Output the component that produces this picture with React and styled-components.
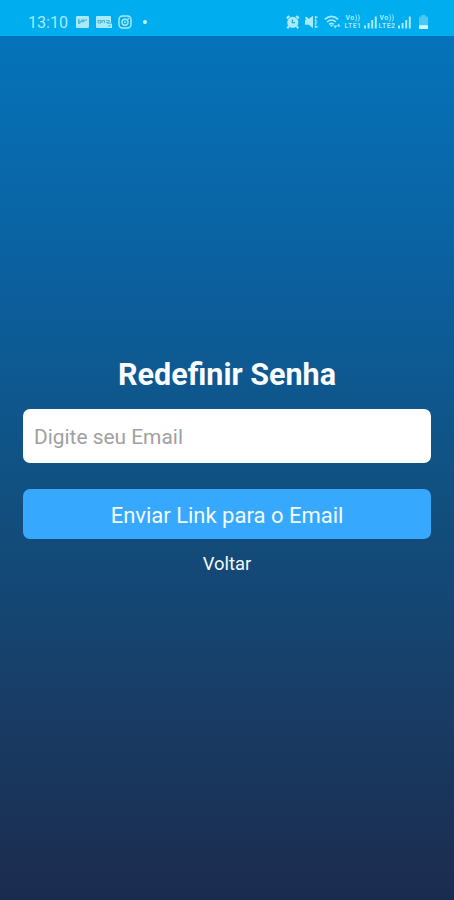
import React, { useState } from "react"
import styled, { createGlobalStyle } from "styled-components"

const App = () => {
  const [email, setEmail] = useState("")

  return (
    <Screen>
      <GlobalStyle />
      <StatusBar>
        <Clock>13:10</Clock>
        <Notifications>
          <PictureIcon />
          <CardIcon />
          <CameraIcon />
          <Dot />
        </Notifications>
        <System>
          <AlarmIcon />
          <MuteIcon />
          <WifiIcon />
          <SimCards>
            <Sim number="1" />
            <Sim number="2" />
          </SimCards>
          <BatteryIcon />
        </System>
      </StatusBar>
      <Form onSubmit={e => e.preventDefault()}>
        <Title>Redefinir Senha</Title>
        <Input
          type="email"
          placeholder="Digite seu Email"
          aria-label="Email"
          value={email}
          onChange={e => setEmail(e.target.value)}
        />
        <SubmitButton type="submit">Enviar Link para o Email</SubmitButton>
        <BackButton type="button">Voltar</BackButton>
      </Form>
    </Screen>
  )
}

const PictureIcon = () => (
  <Icon width="13" height="12" viewBox="0 0 13 12">
    <rect width="13" height="12" rx="1.2" fill="currentColor" />
    <path
      d="M2 8V3h1.5v2H5V3.5h6v1.3H9L7.2 6.8 5.5 5.8 3.6 8z"
      fill="#4dbfe2"
    />
  </Icon>
)

const CardIcon = () => (
  <Icon width="16" height="12" viewBox="0 0 16 12">
    <path
      d="M1 0h13q1 0 1 1v6H11v5H1q-1 0-1-1V1q0-1 1-1z"
      fill="currentColor"
    />
    <path
      d="M2 7V4.5h2.5V7H2M6 7V4.5h2.5V7M10 4.5h3v2h-3"
      fill="none"
      stroke="#4dbbdc"
      strokeWidth="1.2"
    />
    <path d="M11 7.5h5V12h-5z" fill="currentColor" />
    <path d="M12.2 9.8h2.4" stroke="#35b4df" />
  </Icon>
)

const CameraIcon = () => (
  <Icon width="14" height="14" viewBox="0 0 14 14">
    <rect
      x="1"
      y="1"
      width="12"
      height="12"
      rx="3.5"
      fill="none"
      stroke="currentColor"
      strokeWidth="1.5"
    />
    <circle
      cx="7"
      cy="7.2"
      r="3"
      fill="none"
      stroke="currentColor"
      strokeWidth="1.4"
    />
    <circle cx="7" cy="7.2" r="1" fill="currentColor" />
    <circle cx="10.4" cy="3.6" r="0.9" fill="currentColor" />
  </Icon>
)

const AlarmIcon = () => (
  <Icon width="14" height="14" viewBox="0 0 14 14">
    <circle cx="6.8" cy="7.4" r="5.6" fill="currentColor" />
    <path
      d="M.7 3.4 3.4 1M12.9 3.4 10.2 1M3 11.3l-1.7 1.9M10.6 11.3l1.7 1.9"
      stroke="currentColor"
      strokeWidth="2.2"
    />
    <path
      d="M6.4 4.6v3h2.6"
      fill="none"
      stroke="#12aee6"
      strokeWidth="1.3"
    />
  </Icon>
)

const MuteIcon = () => (
  <Icon width="14" height="14" viewBox="0 0 14 14">
    <path d="M0 2h2l1.5 2L8 .8v12.4L3.8 9.8H0V5h1z" fill="currentColor" />
    <path
      d="M10.6 1v12"
      stroke="currentColor"
      strokeWidth="1.6"
      strokeDasharray="2.4 .8"
    />
    <path d="M11 2.2h2M11 7h1.5M11 11.8h2" stroke="currentColor" />
  </Icon>
)

const WifiIcon = () => (
  <Wifi width="17" height="14" viewBox="0 0 17 14">
    <path
      d="M.8 4.4Q7.5-1.6 14.2 4.4M3 7q4.5-4 9 0M5.2 9.3q2.3-2 4.6 0"
      fill="none"
      stroke="currentColor"
      strokeWidth="1.6"
    />
    <path d="M6 10h3L7.5 12z" fill="currentColor" />
    <path d="M9.3 10.5h3.8l-1.9 3zM12.7 11.5h3.8l-1.9-3z" fill="currentColor" />
  </Wifi>
)

const Sim = ({ number }) => (
  <SimGroup>
    <Network>
      <NetworkLabel>Vo))</NetworkLabel>
      <NetworkLabel>LTE{number}</NetworkLabel>
    </Network>
    <Icon width="14" height="14" viewBox="0 0 14 14">
      <path
        d="M1 13.5v-3M4.6 13.5V8M8.2 13.5V5M11.8 13.5V1.5"
        stroke="currentColor"
        strokeWidth="2"
      />
    </Icon>
  </SimGroup>
)

const BatteryIcon = () => (
  <Battery width="9" height="14" viewBox="0 0 9 14">
    <path
      d="M1 1.5h1.5V0h4v1.5H8l1 1V14H0V2.5z"
      fill="currentColor"
      opacity=".45"
    />
    <path d="M0 10.3h9V13q0 1-1 1H1q-1 0-1-1z" fill="#d4f8ff" />
  </Battery>
)

const GlobalStyle = createGlobalStyle`
  * {
    box-sizing: border-box;
  }

  body {
    margin: 0;
    font-family: Roboto, sans-serif;
  }
`

const Screen = styled.div`
  display: flex;
  flex-direction: column;
  height: 100vh;
  background: linear-gradient(
    #0573ba 36px,
    #0c5f9d 32%,
    #105283 52%,
    #17416c 73%,
    #1c2e52 96%,
    #1a2c4e
  );
`

const StatusBar = styled.header`
  display: flex;
  align-items: center;
  flex: none;
  height: 36px;
  padding: 8px 26px 0 28px;
  background: #00aeef;
  color: #a9e9fa;
`

const Clock = styled.span`
  width: 48px;
  padding-top: 2px;
  font-size: 16.1px;
  line-height: 20px;
`

const Notifications = styled.div`
  display: flex;
  align-items: center;
  gap: 6.5px;
`

const Icon = styled.svg`
  display: block;
  flex: none;
`

const Dot = styled.i`
  width: 4px;
  height: 4px;
  margin-left: 4px;
  border-radius: 50%;
  background: #c8f3ff;
`

const System = styled.div`
  display: flex;
  align-items: center;
  gap: 5px;
  margin-left: auto;
`

const Wifi = styled(Icon)`
  margin-right: -2px;
`

const SimCards = styled.div`
  display: flex;
`

const SimGroup = styled.div`
  display: flex;
  align-items: center;
  gap: 2px;
  width: 34px;
`

const Network = styled.div`
  display: flex;
  flex-direction: column;
  align-items: center;
  flex: none;
  width: 18px;
`

const NetworkLabel = styled.span`
  font-size: 6.8px;
  font-weight: 700;
  letter-spacing: 0.5px;
  line-height: 8px;
  white-space: nowrap;
`

const Battery = styled(Icon)`
  margin-left: 2px;
`

const Form = styled.form`
  display: flex;
  flex-direction: column;
  align-items: center;
  padding: 319px 23px 0;
`

const Title = styled.h1`
  margin: 0 0 14px;
  padding-bottom: 1px;
  color: #fafcff;
  font-size: 30.5px;
  font-weight: 700;
  line-height: 39px;
  white-space: nowrap;
`

const Input = styled.input`
  width: 100%;
  height: 54px;
  margin-bottom: 26px;
  padding: 2px 11px 0;
  border: 0;
  border-radius: 7px;
  background: #fff;
  color: #333;
  font-family: inherit;
  font-size: 20.9px;

  &::placeholder {
    color: #a0a0a0;
    opacity: 1;
  }
`

const SubmitButton = styled.button`
  width: 100%;
  height: 50px;
  margin-bottom: 11px;
  padding: 2px 0 0;
  border: 0;
  border-radius: 7px;
  background: #36a9ff;
  color: #f4fbff;
  font-family: inherit;
  font-size: 22px;
`

const BackButton = styled.button`
  padding: 0;
  border: 0;
  background: none;
  color: #f4f8fc;
  font-family: inherit;
  font-size: 18.4px;
  line-height: 28px;
`

export default App
